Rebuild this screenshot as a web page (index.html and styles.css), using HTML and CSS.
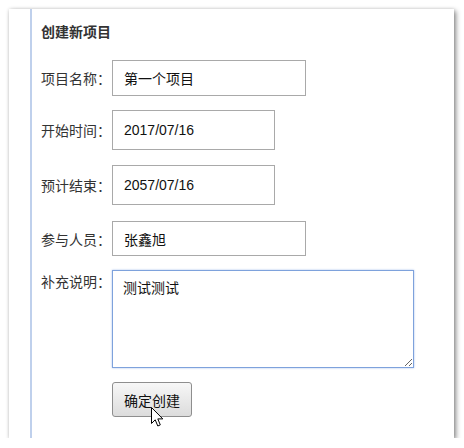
FILE: index.html
```html
<!DOCTYPE html>
<html lang="zh-CN">
<head>
<meta charset="utf-8">
<title>创建新项目</title>
<link rel="stylesheet" href="styles.css">
</head>
<body>
<div class="card">
  <div class="panel">
    <h3 class="title">创建新项目</h3>
    <div class="row row-first">
      <label class="label">项目名称：</label>
      <input class="field field-wide" type="text" value="第一个项目">
    </div>
    <div class="row row-date">
      <label class="label">开始时间：</label>
      <input class="field field-date" type="text" value="2017/07/16">
    </div>
    <div class="row row-date2">
      <label class="label">预计结束：</label>
      <input class="field field-date" type="text" value="2057/07/16">
    </div>
    <div class="row row-people">
      <label class="label">参与人员：</label>
      <input class="field field-wide field-people" type="text" value="张鑫旭">
    </div>
    <div class="row row-text">
      <label class="label label-top">补充说明：</label>
      <textarea class="memo">测试测试</textarea>
    </div>
    <div class="row row-btn">
      <span class="label"></span>
      <span class="btn-wrap">
        <button class="btn" type="button">确定创建</button>
        <svg class="cursor" width="14" height="22" viewBox="0 0 14 22">
          <path d="M1.5 1.5 L1.5 17.5 L5.2 13.8 L7.8 20 L10.3 18.9 L7.8 12.9 L12.8 12.9 Z" fill="#fff" stroke="#000" stroke-width="1" stroke-linejoin="miter"/>
        </svg>
      </span>
    </div>
  </div>
</div>
</body>
</html>
```

FILE: styles.css
```css
html, body {
  margin: 0;
  padding: 0;
  background: #fff;
}

body {
  font-family: "Liberation Sans", "Noto Sans CJK SC", sans-serif;
  font-size: 14px;
  color: #333;
}

.card {
  margin: 9px 0 0 9px;
  width: 445px;
  height: 429px;
  background: #fff;
  box-shadow: 2px 2px 5px rgba(0, 0, 0, 0.45), 0 0 3px rgba(0, 0, 0, 0.12);
  padding-left: 21px;
  box-sizing: border-box;
}

.panel {
  height: 100%;
  border-left: 2px solid #bfd0ec;
  padding: 12px 0 0 9px;
  box-sizing: border-box;
}

.title {
  margin: 0 0 19px;
  font-size: 14px;
  line-height: 20px;
  font-weight: bold;
  color: #333;
  font-family: "Noto Sans CJK SC", sans-serif;
}

.row {
  display: flex;
  align-items: center;
}

.row-date { margin-top: 14px; }
.row-date2 { margin-top: 15px; }
.row-people { margin-top: 16px; }
.row-text { margin-top: 14px; align-items: flex-start; }
.row-btn { margin-top: 14px; }

.label {
  width: 71px;
  flex: none;
  font-family: "Noto Sans CJK SC", sans-serif;
  font-size: 14px;
  line-height: 20px;
  color: #333;
}

.label-top {
  margin-top: 1px;
}

.field {
  box-sizing: border-box;
  margin: 0;
  border: 1px solid #a9a9a9;
  border-radius: 0;
  padding: 0 0 0 11px;
  font-family: "Liberation Sans", "Noto Sans CJK SC", sans-serif;
  font-size: 14px;
  color: #111;
  background: #fff;
  outline: none;
}

.field-wide {
  width: 194px;
  height: 36px;
}

.field-people {
  height: 35px;
}

.field-date {
  width: 163px;
  height: 40px;
}

.memo {
  box-sizing: border-box;
  width: 302px;
  height: 98px;
  margin: 0;
  padding: 6px 10px;
  border: 1px solid #7ea2dc;
  box-shadow: 0 0 2px #a8c1ec;
  font-family: "Noto Sans CJK SC", sans-serif;
  font-size: 14px;
  line-height: 20px;
  color: #111;
  outline: none;
}

.btn-wrap {
  position: relative;
  display: inline-block;
}

.btn {
  box-sizing: border-box;
  width: 80px;
  height: 35px;
  margin: 0;
  padding: 0;
  border: 1px solid #8e8e8e;
  border-radius: 3px;
  background: linear-gradient(#f7f7f7, #dcdcdc);
  font-family: "Noto Sans CJK SC", sans-serif;
  font-size: 14px;
  color: #111;
}

.cursor {
  position: absolute;
  left: 38px;
  top: 24px;
}
```
